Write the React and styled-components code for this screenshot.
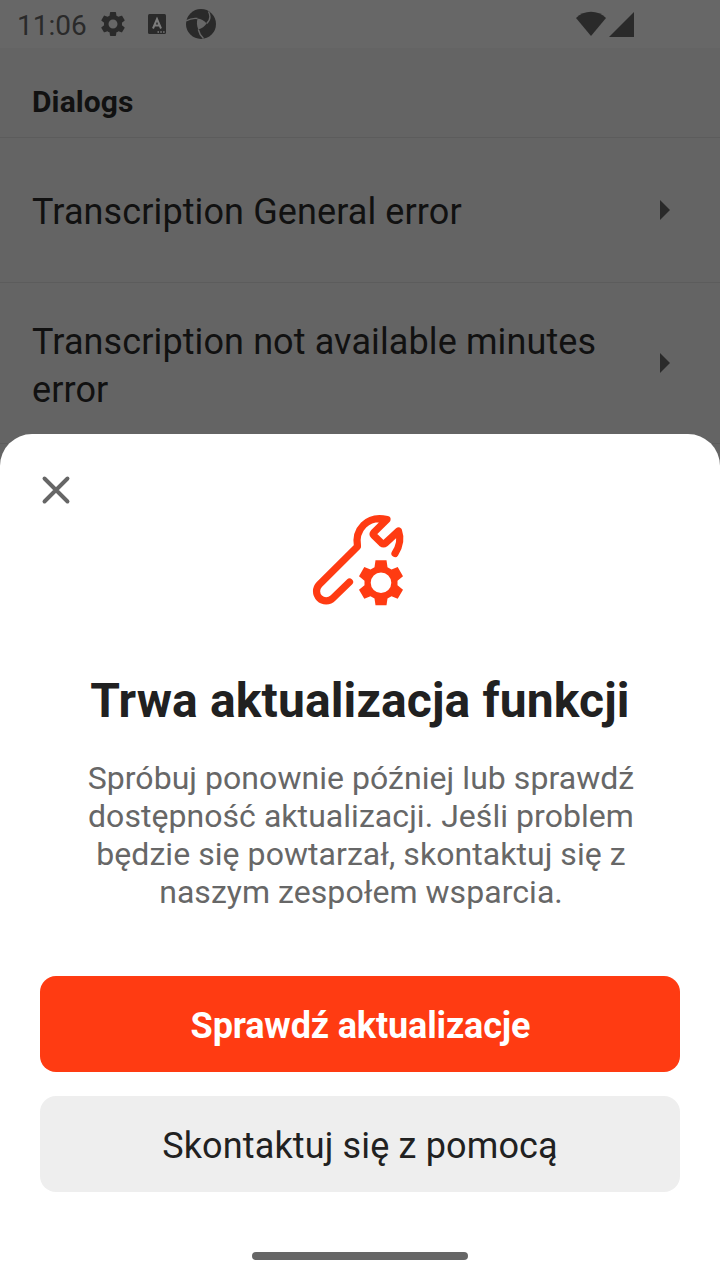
import React from "react";
import styled, { createGlobalStyle } from "styled-components";

const GlobalStyle = createGlobalStyle`
  * { box-sizing: border-box; }
  body { margin: 0; background: #646464; font-family: Roboto, sans-serif; }
`;

const Screen = styled.div`
  position: relative;
  width: 720px;
  height: 1280px;
  overflow: hidden;
  background: #646464;
`;

const StatusBar = styled.header`
  display: flex;
  align-items: center;
  justify-content: space-between;
  height: 48px;
  padding: 0 86px 0 17px;
  background: #676767;
  color: #2a2a2a;
`;

const StatusGroup = styled.div`
  display: flex;
  align-items: center;
  height: 48px;
`;

const Clock = styled.span`
  width: 81px;
  padding-top: 3px;
  font-size: 28px;
  line-height: 34px;
  white-space: nowrap;
`;

const Icon = styled.svg`
  display: block;
  flex: none;
  margin-left: ${(p) => p.$gap || 0}px;
`;

const SectionHeader = styled.h2`
  height: 90px;
  margin: 0;
  padding: 36px 32px 0;
  border-bottom: 1px solid #5c5c5c;
  color: #111;
  font-size: 30px;
  font-weight: 700;
  line-height: 36px;
  letter-spacing: 0.1px;
`;

const Row = styled.div`
  display: flex;
  align-items: center;
  justify-content: space-between;
  height: ${(p) => p.$height}px;
  padding: 0 50px 0 32px;
  border-bottom: 1px solid #5c5c5c;
`;

const RowLabel = styled.span`
  width: 590px;
  padding-top: ${(p) => p.$offset || 3}px;
  color: #111;
  font-size: 36px;
  line-height: 48px;
  letter-spacing: 0.11px;
`;

const Sheet = styled.section`
  position: absolute;
  inset: 434px 0 0;
  display: flex;
  flex-direction: column;
  align-items: center;
  border-radius: 32px 32px 0 0;
  padding: 32px 40px 0;
  background: #fff;
`;

const CloseButton = styled.button`
  align-self: flex-start;
  width: 32px;
  height: 46px;
  padding: 8px 0 6px;
  border: 0;
  background: none;
`;

const Illustration = styled.svg`
  display: block;
  flex: none;
  width: 96px;
  height: 96px;
`;

const Title = styled.h1`
  margin: 65px 0 0;
  color: #212121;
  font-size: 48px;
  font-weight: 700;
  line-height: 56px;
  letter-spacing: 0.13px;
  white-space: nowrap;
`;

const Message = styled.p`
  margin: 30px 0 0;
  padding-left: 2px;
  color: #676767;
  font-size: 32px;
  line-height: 38px;
  letter-spacing: 0.05px;
  text-align: center;
  white-space: pre-line;
`;

const Actions = styled.div`
  display: flex;
  flex-direction: column;
  gap: 24px;
  width: 100%;
  margin-top: 65px;
`;

const ActionButton = styled.button`
  height: 96px;
  padding: 3px 0 0 ${(p) => (p.$primary ? 1 : 0)}px;
  border: 0;
  border-radius: 16px;
  background: ${(p) => (p.$primary ? "#ff3b12" : "#eee")};
  color: ${(p) => (p.$primary ? "#fff" : "#212121")};
  font-family: inherit;
  font-size: 36px;
  font-weight: ${(p) => (p.$primary ? 700 : 400)};
  letter-spacing: ${(p) => (p.$primary ? -0.14 : 0.15)}px;
`;

const HomeHandle = styled.div`
  width: 216px;
  height: 8px;
  margin-top: 60px;
  border-radius: 4px;
  background: #666;
`;

const GEAR =
  "M19.14 12.94c.04-.3.06-.61.06-.94s-.02-.64-.07-.94l2.03-1.58c.18-.14.23-.41.12-.61l-1.92-3.32c-.12-.22-.37-.29-.59-.22l-2.39.96c-.5-.38-1.03-.7-1.62-.94l-.36-2.54c-.04-.24-.24-.41-.48-.41h-3.84c-.24 0-.43.17-.47.41l-.36 2.54c-.59.24-1.13.57-1.62.94l-2.39-.96c-.22-.08-.47 0-.59.22L2.74 8.87c-.12.21-.08.47.12.61l2.03 1.58c-.05.3-.09.63-.09.94s.02.64.07.94l-2.03 1.58c-.18.14-.23.41-.12.61l1.92 3.32c.12.22.37.29.59.22l2.39-.96c.5.38 1.03.7 1.62.94l.36 2.54c.05.24.24.41.48.41h3.84c.24 0 .44-.17.47-.41l.36-2.54c.59-.24 1.13-.56 1.62-.94l2.39.96c.22.08.47 0 .59-.22l1.92-3.32c.12-.22.07-.47-.12-.61l-2.01-1.58zM12 15.6c-1.98 0-3.6-1.62-3.6-3.6s1.62-3.6 3.6-3.6 3.6 1.62 3.6 3.6-1.62 3.6-3.6 3.6z";

function Chevron() {
  return (
    <Icon width="10" height="20" viewBox="0 0 10 20">
      <path d="M0 0 10 10 0 20Z" fill="#2a2a2a" />
    </Icon>
  );
}

export default function App() {
  return (
    <Screen>
      <GlobalStyle />
      <StatusBar>
        <StatusGroup>
          <Clock>11:06</Clock>
          <Icon width="30" height="30" viewBox="0 0 24 24">
            <path d={GEAR} fill="#2a2a2a" />
          </Icon>
          <Icon $gap={19} width="20" height="20" viewBox="0 0 20 20">
            <rect x="1" width="18" height="20" rx="1.5" fill="#2a2a2a" />
            <path d="M6 14.500 10 5 14 14.500M7.400 11.500H12.600" fill="none" stroke="#7c7c7c" strokeWidth="2" />
            <path d="M10.500 18h1.500m1.300 0h1.500m1.300 0h1.500" stroke="#7c7c7c" strokeWidth="1.500" />
          </Icon>
          <Icon $gap={19} width="30" height="30" viewBox="0 0 30 30">
            <circle cx="15" cy="15" r="15" fill="#2a2a2a" />
            <path d="M11.500 9.500C15 9.800 18 11.500 20.700 14.500C18.500 17.500 16 19.500 12.300 20.500C10.800 17 10.500 13 11.500 9.500Z" fill="#676767" />
            <path
              d="M0 12C3.500 9.800 7.500 9 11.500 9.500M22.500 2.500C24.800 7 24 11.500 20.700 14.500M12.300 20.500C13 24 14.500 26.500 17.500 29.500"
              fill="none"
              stroke="#676767"
              strokeWidth="1.400"
            />
          </Icon>
        </StatusGroup>
        <StatusGroup>
          <Icon width="30" height="26" viewBox="0 0 30 26">
            <path d="M0 7C8-1.500 22-1.500 30 7L15 25Z" fill="#2a2a2a" />
          </Icon>
          <Icon $gap={3} width="25" height="25" viewBox="0 0 25 25">
            <path d="M25 0V25H0Z" fill="#2a2a2a" />
          </Icon>
        </StatusGroup>
      </StatusBar>
      <SectionHeader>Dialogs</SectionHeader>
      <Row $height={145}>
        <RowLabel>Transcription General error</RowLabel>
        <Chevron />
      </Row>
      <Row $height={161}>
        <RowLabel $offset={6}>Transcription not available minutes error</RowLabel>
        <Chevron />
      </Row>
      <Sheet>
        <CloseButton aria-label="Zamknij">
          <Icon width="32" height="32" viewBox="0 0 32 32">
            <path d="M4.500 4.500 27.500 27.500M27.500 4.500 4.500 27.500" stroke="#666" strokeWidth="3.900" strokeLinecap="round" />
          </Icon>
        </CloseButton>
        <Illustration viewBox="12 12 96 96">
          <path
            d="M49.500 82 33 98A9.600 9.600 0 0 1 19.300 84.500L57.500 46.500C54.500 30 67 14.800 87 19.500L73.800 32.500Q72.500 34 73.800 35.500L81.500 43Q83.500 44.500 85.500 43L98.500 31C101 38 99.500 46.500 95 53.500"
            fill="none"
            stroke="#ff3b12"
            strokeWidth="7.200"
            strokeLinecap="round"
            strokeLinejoin="round"
          />
          <path
            fillRule="evenodd"
            fill="#ff3b12"
            d="M75.500 60.300H86.500L87.500 67.300 91.500 69.600 97.700 67 103 76.300 97.500 80.700V85.300L103 89.700 97.700 98.700 91.500 96.200 87.500 98.500 86.500 105.300H75.500L74.500 98.500 70.500 96.200 64.300 98.700 59 89.700 64.500 85.300V80.700L59 76.300 64.300 67 70.500 69.600 74.500 67.300ZM81 72.500A10.300 10.300 0 1 0 81 93.100A10.300 10.300 0 1 0 81 72.500Z"
          />
        </Illustration>
        <Title>Trwa aktualizacja funkcji</Title>
        <Message>
          {"Spróbuj ponownie później lub sprawdź\ndostępność aktualizacji. Jeśli problem\nbędzie się powtarzał, skontaktuj się z\nnaszym zespołem wsparcia."}
        </Message>
        <Actions>
          <ActionButton $primary>Sprawdź aktualizacje</ActionButton>
          <ActionButton>Skontaktuj się z pomocą</ActionButton>
        </Actions>
        <HomeHandle />
      </Sheet>
    </Screen>
  );
}
